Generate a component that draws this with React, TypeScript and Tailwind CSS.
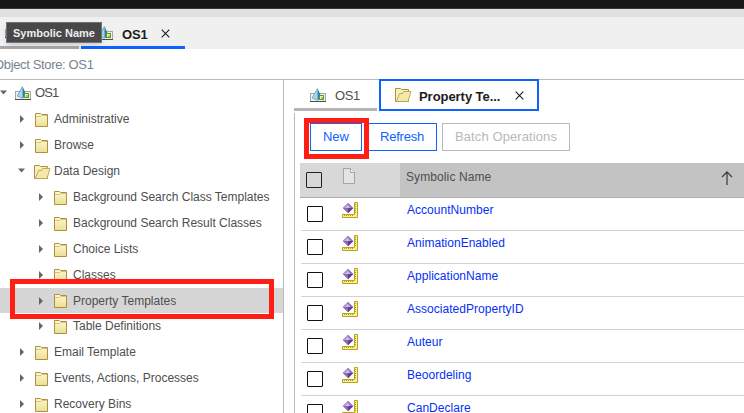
import React from "react";

function StoreIcon() {
  return (
    <svg className="block shrink-0" width="16" height="15" viewBox="0 0 16 15">
      <rect x="0.500" y="5.500" width="15" height="8" fill="#f1f1f1" stroke="#a5a5a5" />
      <path d="M0 13.500h16" stroke="#4a4a4a" />
      <path d="M7.500 0L2 10l5.500 2.500z" fill="#a9d6ee" />
      <path d="M7.500 0L11.500 9.500 7.500 12.500z" fill="#2f7cae" />
      <path d="M7.300 .8L2.200 10l5.200 2.200" fill="none" stroke="#4d93bd" strokeWidth=".7" />
      <rect x="9.500" y="7.500" width="4" height="4" fill="#e6f5c4" stroke="#5f9a20" />
      <rect x="11" y="9" width="2" height="2" fill="#a5d04f" />
    </svg>
  );
}

function Folder() {
  return (
    <svg className="block shrink-0" width="16" height="14" viewBox="0 0 16 14">
      <defs>
        <linearGradient id="fold" x2="0" y2="1">
          <stop stopColor="#fcf8d4" />
          <stop offset="1" stopColor="#ebdf92" />
        </linearGradient>
      </defs>
      <path d="M1.500 13.500V.5h5l1 1h6v12z" fill="url(#fold)" stroke="#b0903f" />
      <path d="M2 3.500h5l1-1h5" fill="none" stroke="#dcc476" />
    </svg>
  );
}

function OpenFolder() {
  return (
    <svg className="block shrink-0" width="17" height="14" viewBox="0 0 17 14">
      <path d="M.5 13.500V.5h5l1 1h7v12z" fill="#f8efba" stroke="#b0903f" />
      <path d="M1.500 13L4.500 5.500h3l1-2h7.500L13 13.500H1z" fill="#f3e8a8" stroke="#bfa252" strokeWidth=".9" />
    </svg>
  );
}

function PropertyIcon() {
  return (
    <svg className="block" width="16" height="16" viewBox="0 0 16 16">
      <path d="M12.500 .5h3v15H.5v-3h12z" fill="#fbf287" stroke="#b19616" strokeWidth=".9" />
      <path d="M13 2.500h1M13 4.500h1M13 6.500h1M13 8.500h1M13 10.500h1M2.500 13v1M4.500 13v1M6.500 13v1M8.500 13v1M10.500 13v1" stroke="#9a8112" strokeWidth=".8" />
      <path d="M6 .7L11.300 6 6 11.300.7 6z" fill="#8a68bd" />
      <path d="M6 .7V6H.7z" fill="#b39ad6" />
      <path d="M6 2.800L8.500 6H3.500z" fill="#cdbce6" />
      <path d="M6 11.300V6h5.300z" fill="#62408f" />
    </svg>
  );
}

function Close() {
  return (
    <svg className="block shrink-0" width="9" height="9" viewBox="0 0 9 9">
      <path d="M.7 .7l7.600 7.600M8.300 .7L.7 8.300" stroke="#1c1c1c" strokeWidth="1.100" />
    </svg>
  );
}

function Caret({ open }: { open?: boolean }) {
  return (
    <svg className="block w-[7px] shrink-0" height="8" viewBox="0 0 7 8">
      <path d={open ? "M0 1.500h7L3.500 5.500z" : "M2 0L6 4 2 8z"} fill="#666" />
    </svg>
  );
}

type Node = { name: string; level: number; open?: boolean; selected?: boolean };
const nodes: Node[] = [
  { name: "Administrative", level: 1 },
  { name: "Browse", level: 1 },
  { name: "Data Design", level: 1, open: true },
  { name: "Background Search Class Templates", level: 2 },
  { name: "Background Search Result Classes", level: 2 },
  { name: "Choice Lists", level: 2 },
  { name: "Classes", level: 2 },
  { name: "Property Templates", level: 2, selected: true },
  { name: "Table Definitions", level: 2 },
  { name: "Email Template", level: 1 },
  { name: "Events, Actions, Processes", level: 1 },
  { name: "Recovery Bins", level: 1 },
];

const properties = ["AccountNumber", "AnimationEnabled", "ApplicationName", "AssociatedPropertyID", "Auteur", "Beoordeling", "CanDeclare"];

function TreeRow({ node }: { node: Node }) {
  return (
    <div className={`flex shrink-0 items-center ${node.selected ? "h-[25px] bg-[#d6d6d6]" : "h-[26px]"} ${node.level === 1 ? "pl-[18px]" : "pl-[37px]"}`}>
      <Caret open={node.open} />
      <div className="ml-[9px] mt-px flex w-[20px]">{node.open ? <OpenFolder /> : <Folder />}</div>
      <span className="whitespace-nowrap">{node.name}</span>
    </div>
  );
}

export default function App() {
  return (
    <div className="relative flex h-[413px] w-[744px] flex-col overflow-hidden bg-white font-['Liberation_Sans',Arial,sans-serif] text-[12px] leading-[16px] text-[#4e4e4e]">
      <div className="h-[9px] shrink-0 border-b border-[#3a3a3a] bg-[#171717]" />
      <div className="h-[8px] shrink-0 bg-[#dfe0e2]" />
      <header className="flex h-[32px] shrink-0 gap-[2px] bg-[#f0f0f0]">
        <div className="flex w-[79px] items-center border-b-[3px] border-[#aaa8a8] pl-[5px]"><StoreIcon /></div>
        <div className="flex w-[104px] items-center border-b-[3px] border-[#0f62fe] pl-[16px] pt-[3px]">
          <StoreIcon />
          <span className="ml-[9px] mt-[3px] w-[39px] text-[13px] font-bold tracking-[-0.2px] text-[#1c1c1c]">OS1</span>
          <Close />
        </div>
      </header>
      <div className="flex h-[30px] shrink-0 items-center text-[#78838e]">
        <span className="-ml-[6px] mt-px text-[13px] tracking-[-0.35px]">Object Store: OS1</span>
      </div>
      <div className="flex min-h-0 flex-1">
        <nav className="flex w-[284px] shrink-0 flex-col overflow-hidden border-r border-t border-[#b9b9b9]">
          <div className="flex h-[26px] shrink-0 items-center">
            <Caret open />
            <div className="ml-[8px] flex w-[20px]"><StoreIcon /></div>
            <span className="text-[13px] tracking-[-0.9px]">OS1</span>
          </div>
          {nodes.map((n) => <TreeRow key={n.name} node={n} />)}
        </nav>
        <div className="flex w-[460px] shrink-0 flex-col border-t border-[#b9b9b9] pl-[10px]">
          <div className="-mt-px flex h-[34px] shrink-0 gap-[2px] pb-[2px]">
            <div className="flex w-[83px] items-center border-b-[3px] border-[#b4b4b4] pl-[16px] pt-[4px]">
              <StoreIcon /><span className="ml-[9px] mt-px text-[13px] tracking-[-0.4px]">OS1</span>
            </div>
            <div className="flex w-[160px] items-center border-2 border-[#0f62fe] bg-white pl-[14px]">
              <div className="-mt-px"><OpenFolder /></div>
              <span className="ml-[7px] mt-[3px] w-[96px] text-[13px] font-bold tracking-[-0.05px] text-[#1c1c1c]">Property Te...</span>
              <Close />
            </div>
          </div>
          <main className="flex flex-1 flex-col overflow-hidden border-l border-[#b9b9b9]">
            <div className="flex h-[50px] shrink-0 pl-[15px] pt-[10px] text-[13px] text-[#0f62fe]">
              <button className="h-[28px] w-[52px] border border-[#0f62fe]">New</button>
              <button className="ml-[5px] h-[28px] w-[70px] border border-[#0f62fe] tracking-[-0.2px]">Refresh</button>
              <button className="ml-[5px] h-[28px] w-[128px] border border-[#b9b9b9] tracking-[0.1px] text-[#b9b9b9]">Batch Operations</button>
            </div>
            <div className="ml-[5px] flex h-[35px] shrink-0 border-b border-[#adadad] bg-[#d8d8d8]">
              <div className="flex w-[100px] items-center pl-[6px]">
                <i className="size-[16px] rounded-[1px] border border-[#222]" />
                <svg className="-mt-[8px] ml-[20px]" width="14" height="16" viewBox="0 0 14 16">
                  <path d="M1.500.5h7l4 4v11h-11z" fill="#e4e4e4" stroke="#a5a5a5" />
                  <path d="M8.500.5v4h4" fill="#f3f3f3" stroke="#a5a5a5" />
                </svg>
              </div>
              <div className="flex flex-1 justify-between bg-[#c3c3c3] pl-[6px] pr-[11px] pt-[6px]">
                <span className="tracking-[0.1px]">Symbolic Name</span>
                <svg className="mt-[2px]" width="12" height="15" viewBox="0 0 12 15">
                  <path d="M6 14V1M1 6l5-5 5 5" fill="none" stroke="#424242" strokeWidth="1.300" />
                </svg>
              </div>
            </div>
            {properties.map((p) => (
              <div key={p} className="ml-[6px] flex h-[33px] shrink-0 border-b border-[#d2d2d2] pl-[6px]">
                <i className="mt-[8px] size-[16px] rounded-[1px] border border-[#111]" />
                <div className="ml-[19px] mt-[4px] w-[65px]"><PropertyIcon /></div>
                <span className="mt-[4px] tracking-[0.03px] text-[#0530f5]">{p}</span>
              </div>
            ))}
          </main>
        </div>
      </div>
      <div className="absolute left-[6px] top-[22px] flex h-[21px] w-[96px] items-center justify-center whitespace-nowrap border border-[#737373] bg-[#48484b] text-[11px] font-bold text-[#ededed] shadow-md">Symbolic Name</div>
      <div className="absolute left-[10px] top-[279px] h-[40px] w-[264px] border-[5px] border-[#ff1d14]" />
      <div className="absolute left-[304px] top-[118px] h-[41px] w-[65px] border-[5px] border-[#ff1d14]" />
    </div>
  );
}
